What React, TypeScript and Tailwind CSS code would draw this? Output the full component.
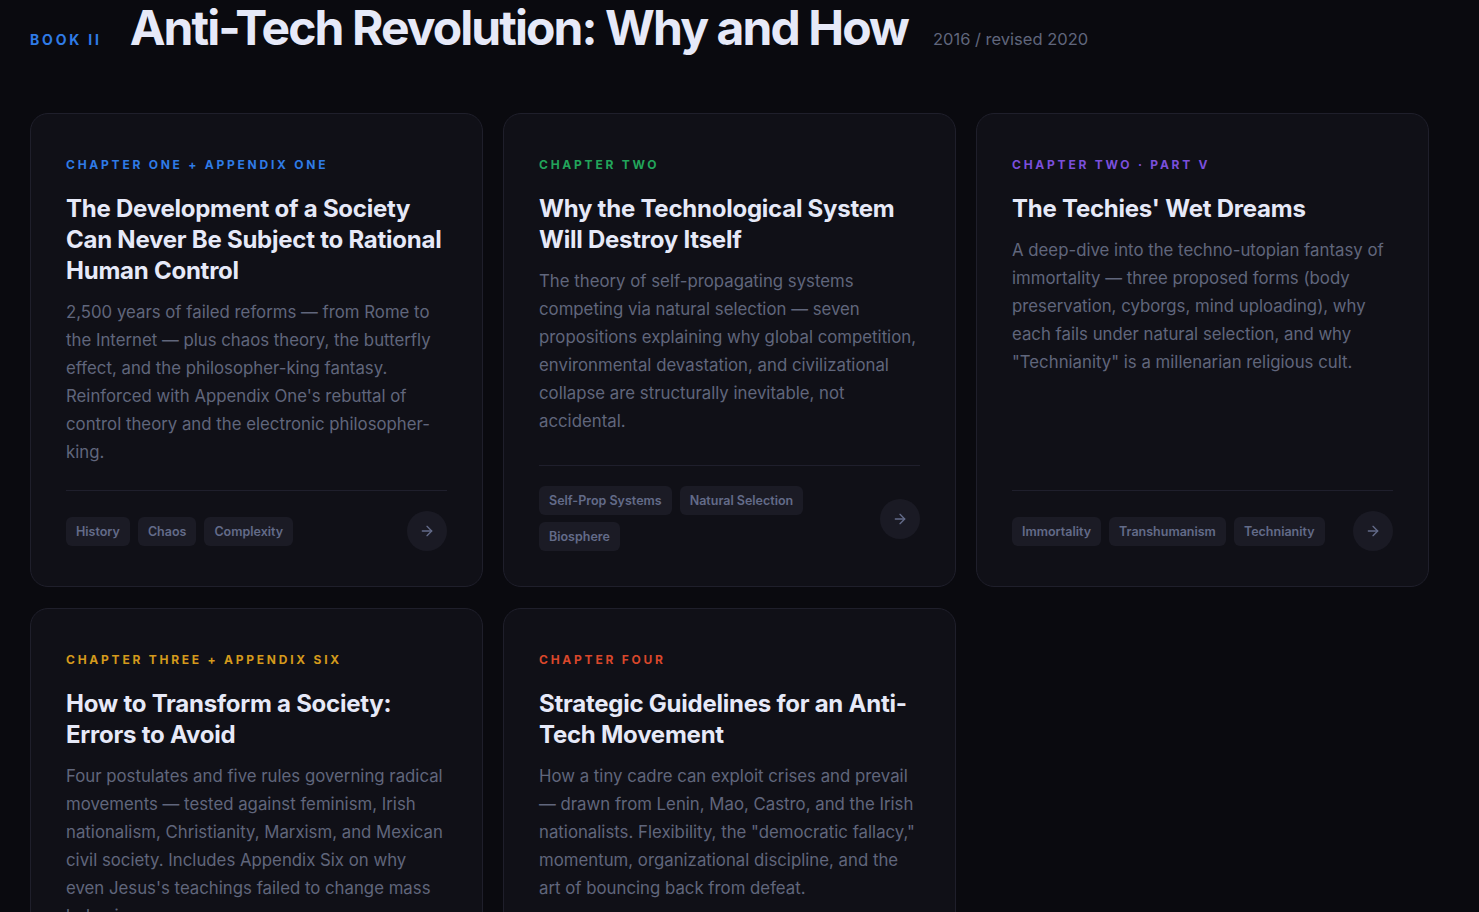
import React from "react";

type Card = {
  label: string;
  labelColor: string;
  title: string;
  body: string;
  tags: string[];
};

const cards: Card[] = [
  {
    label: "Chapter One + Appendix One",
    labelColor: "text-[#2f7be6]",
    title: "The Development of a Society Can Never Be Subject to Rational Human Control",
    body:
      "2,500 years of failed reforms — from Rome to the Internet — plus chaos theory, the butterfly effect, and the philosopher-king fantasy. Reinforced with Appendix One's rebuttal of control theory and the electronic philosopher-king.",
    tags: ["History", "Chaos", "Complexity"],
  },
  {
    label: "Chapter Two",
    labelColor: "text-[#22a55b]",
    title: "Why the Technological System Will Destroy Itself",
    body:
      "The theory of self-propagating systems competing via natural selection — seven propositions explaining why global competition, environmental devastation, and civilizational collapse are structurally inevitable, not accidental.",
    tags: ["Self-Prop Systems", "Natural Selection", "Biosphere"],
  },
  {
    label: "Chapter Two · Part V",
    labelColor: "text-[#7b4fdc]",
    title: "The Techies' Wet Dreams",
    body:
      'A deep-dive into the techno-utopian fantasy of immortality — three proposed forms (body preservation, cyborgs, mind uploading), why each fails under natural selection, and why "Technianity" is a millenarian religious cult.',
    tags: ["Immortality", "Transhumanism", "Technianity"],
  },
  {
    label: "Chapter Three + Appendix Six",
    labelColor: "text-[#d49a1c]",
    title: "How to Transform a Society: Errors to Avoid",
    body:
      "Four postulates and five rules governing radical movements — tested against feminism, Irish nationalism, Christianity, Marxism, and Mexican civil society. Includes Appendix Six on why even Jesus's teachings failed to change mass behavior.",
    tags: ["Strategy", "Movements", "Postulates"],
  },
  {
    label: "Chapter Four",
    labelColor: "text-[#d9472b]",
    title: "Strategic Guidelines for an Anti-Tech Movement",
    body:
      'How a tiny cadre can exploit crises and prevail — drawn from Lenin, Mao, Castro, and the Irish nationalists. Flexibility, the "democratic fallacy," momentum, organizational discipline, and the art of bouncing back from defeat.',
    tags: ["Tactics", "Revolution", "Organization"],
  },
];

function Arrow() {
  return (
    <svg width="16" height="16" viewBox="0 0 24 24" fill="none" stroke="currentColor" strokeWidth="2" strokeLinecap="round" strokeLinejoin="round">
      <path d="M5 12h14" />
      <path d="m12 5 7 7-7 7" />
    </svg>
  );
}

function ChapterCard({ c }: { c: Card }) {
  return (
    <div className="flex flex-col rounded-[18px] border border-[#1f1f2b] bg-[#101017] px-[35px] pt-[41px] pb-[35px]">
      <div className={`text-[12px] font-bold uppercase leading-[20px] tracking-[0.23em] ${c.labelColor}`}>{c.label}</div>
      <h2 className="mt-[18px] text-[24px] font-bold leading-[31px] tracking-[-0.01em] text-[#e6e9f8]">{c.title}</h2>
      <p className="mt-3 mb-6 text-[16.8px] leading-[28px] text-[#60667c]">{c.body}</p>
      <div className="mt-auto flex items-center justify-between gap-4 border-t border-[#1f1f2c] pt-5">
        <div className="flex flex-wrap gap-x-2 gap-y-[7px]">
          {c.tags.map((t) => (
            <span key={t} className="rounded-md bg-[#1b1b25] px-[10px] py-[5px] text-[12.5px] font-semibold leading-[19px] text-[#636b89]">
              {t}
            </span>
          ))}
        </div>
        <div className="flex h-10 w-10 shrink-0 items-center justify-center rounded-full bg-[#1a1a24] text-[#636b89]">
          <Arrow />
        </div>
      </div>
    </div>
  );
}

export default function App() {
  return (
    <div className="min-h-screen bg-[#0a0a0f]" style={{ fontFamily: "Inter, 'Noto Sans', sans-serif" }}>
      <div className="flex items-baseline gap-7 pl-[30px] pt-[4px]">
        <div className="text-[14px] font-bold uppercase tracking-[0.2em] text-[#2f7be6]">Book II</div>
        <h1 className="text-[48px] font-bold leading-[48px] tracking-[-0.04em] text-[#e6e9f8]">Anti-Tech Revolution: Why and How</h1>
        <div className="ml-[-3px] text-[16.5px] text-[#60667c]">2016 / revised 2020</div>
      </div>
      <div className="ml-[30px] mt-[61px] grid w-[1399px] grid-cols-3 gap-x-5 gap-y-[21px]">
        {cards.map((c) => (
          <ChapterCard key={c.title} c={c} />
        ))}
      </div>
    </div>
  );
}
